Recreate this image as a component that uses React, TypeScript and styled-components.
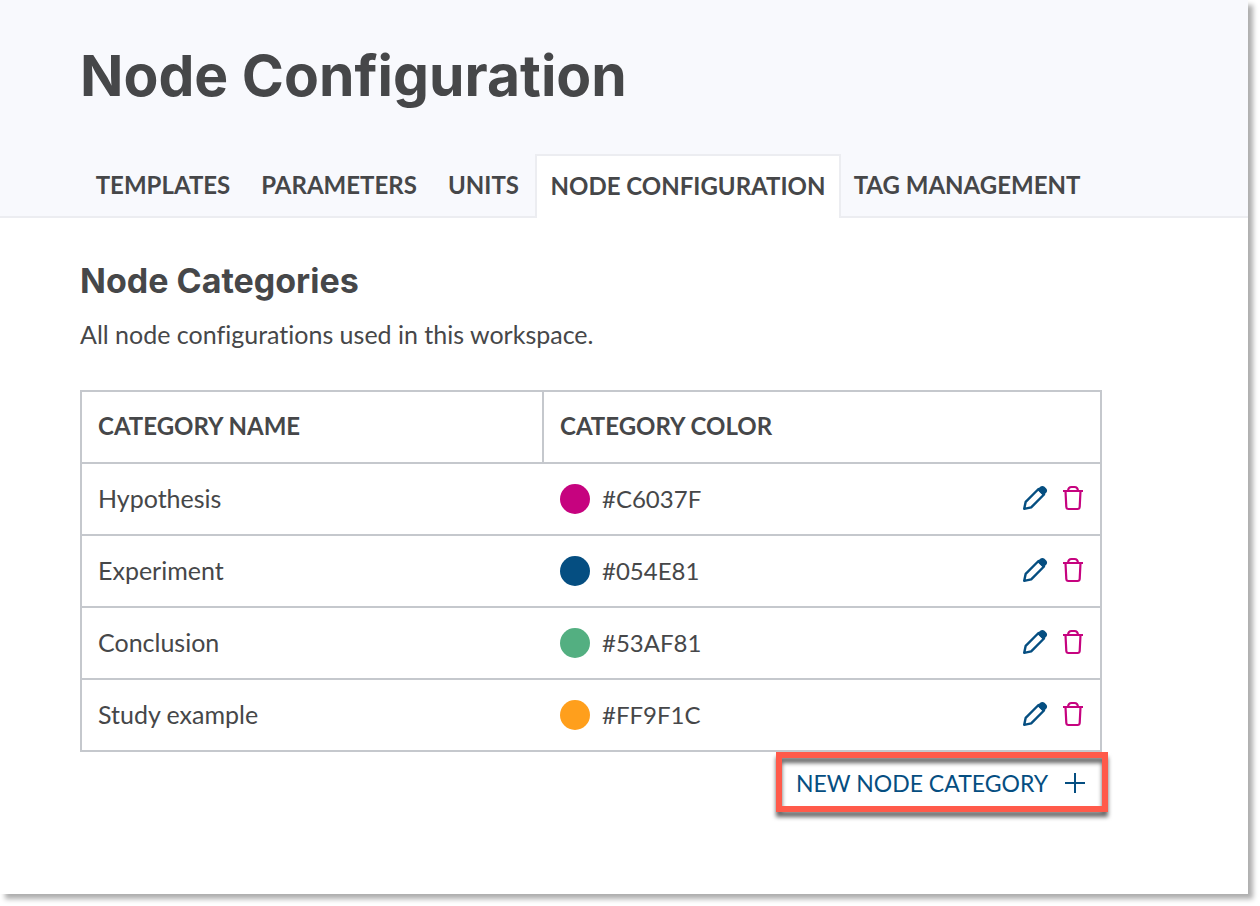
import React from "react";
import styled, { createGlobalStyle } from "styled-components";

const GlobalStyle = createGlobalStyle`
  *, *::before, *::after { box-sizing: border-box; }
  body {
    margin: 0;
    background: #ffffff;
    color: #464749;
    font-family: Lato, "Liberation Sans", sans-serif;
    font-size: 24px;
    line-height: 32px;
    font-variant-ligatures: none;
  }
`;

const Page = styled.div`
  margin: 0 12px 12px 0;
  min-height: calc(100vh - 12px);
  background: #ffffff;
  box-shadow: 5px 5px 5px rgba(0, 0, 0, 0.32);
`;

const Header = styled.header`
  display: flex;
  flex-direction: column;
  gap: 42px;
  padding: 40px 80px 0;
  background: #f8f9fd;
  box-shadow: inset 0 -2px 0 #ecedf1;
`;

const Title = styled.h1`
  margin: 0;
  font-family: Inter, sans-serif;
  font-size: 57px;
  line-height: 72px;
  font-weight: 700;
`;

const Tabs = styled.nav`
  display: grid;
  grid-template-columns: 166px 186px 103px 306px 252px;
`;

const Tab = styled.a<{ $active?: boolean }>`
  display: flex;
  align-items: center;
  justify-content: center;
  height: 64px;
  padding-bottom: ${(p) => (p.$active ? "2px" : "4px")};
  border: 2px solid ${(p) => (p.$active ? "#ecedf1" : "transparent")};
  border-bottom: 0;
  background: ${(p) => (p.$active ? "#ffffff" : "transparent")};
  color: inherit;
  font-weight: 700;
  white-space: nowrap;
  text-decoration: none;
`;

const Content = styled.main`
  max-width: 1182px;
  padding: 40px 80px 80px;
`;

const Heading = styled.h2`
  margin: 0;
  font-family: Inter, sans-serif;
  font-size: 34px;
  line-height: 46px;
  font-weight: 700;
`;

const Description = styled.p`
  margin: 14px 0 40px;
  font-size: 25px;
`;

const Table = styled.table`
  width: 100%;
  border: 2px solid #c5c8cd;
  border-spacing: 0;
  table-layout: fixed;
`;

const HeadCell = styled.th<{ $divided?: boolean }>`
  width: ${(p) => (p.$divided ? "462px" : "auto")};
  height: 72px;
  padding: 0 16px 2px;
  border-bottom: 2px solid #c5c8cd;
  border-right: ${(p) => (p.$divided ? "2px solid #c5c8cd" : "0")};
  text-align: left;
  font-weight: 700;
`;

const Row = styled.tr`
  &:not(:last-child) > td {
    border-bottom: 2px solid #c5c8cd;
  }
  &:last-child > td {
    height: 70px;
  }
`;

const Cell = styled.td`
  height: 72px;
  padding: 0 16px;
`;

const NameCell = styled(Cell)`
  padding-bottom: 2px;
  font-size: 25px;
`;

const ColorLine = styled.div`
  display: flex;
  align-items: center;
  gap: 12px;
`;

const Swatch = styled.span<{ $color: string }>`
  width: 30px;
  height: 30px;
  border-radius: 50%;
  background: ${(p) => p.$color};
`;

const Actions = styled.div`
  display: flex;
  gap: 14px;
  margin-left: auto;
  padding-bottom: 2px;
`;

const IconButton = styled.button<{ $tone: string }>`
  display: flex;
  padding: 0;
  border: 0;
  background: none;
  color: ${(p) => p.$tone};
  cursor: pointer;
`;

const Footer = styled.div`
  display: flex;
  justify-content: flex-end;
  padding-top: 6px;
`;

const NewButton = styled.button`
  position: relative;
  display: flex;
  align-items: center;
  justify-content: space-between;
  width: 320px;
  height: 48px;
  padding: 2px 16px 0 14px;
  border: 0;
  background: #ffffff;
  color: #054e81;
  font: inherit;
  font-size: 23px;
  white-space: nowrap;
  cursor: pointer;

  &::before {
    content: "";
    position: absolute;
    inset: -6px;
    border: 6px solid #ff5a4a;
    filter: drop-shadow(0 5px 2px rgba(0, 0, 0, 0.6));
    pointer-events: none;
  }
`;

const PencilIcon = () => (
  <svg width="26" height="26" viewBox="0 0 26 26" fill="none" aria-hidden="true">
    <path
      d="M2.200 23.800l1.500-7L16.500 4l5.500 5.500L9.200 22.300z"
      stroke="currentColor"
      strokeWidth="2.400"
      strokeLinejoin="round"
    />
    <path
      d="M15.200 4.800l3-3c1.200-1.200 3.100-1.200 4.300 0l1.700 1.700c1.200 1.200 1.200 3.100 0 4.300l-3 3z"
      fill="currentColor"
    />
  </svg>
);

const TrashIcon = () => (
  <svg width="22" height="26" viewBox="0 0 22 26" fill="none" aria-hidden="true">
    <path
      d="M1 6h20M6 6c.2-2.600 1.500-4 3.500-4h3c2 0 3.300 1.400 3.500 4M3.500 6l.8 16c.1 1.300.8 2 2.100 2h9.200c1.300 0 2-.7 2.100-2l.8-16"
      stroke="currentColor"
      strokeWidth="2.200"
    />
  </svg>
);

const PlusIcon = () => (
  <svg width="22" height="22" viewBox="0 0 22 22" aria-hidden="true">
    <path d="M11 1v20M1 11h20" stroke="currentColor" strokeWidth="2" />
  </svg>
);

const tabs = ["TEMPLATES", "PARAMETERS", "UNITS", "NODE CONFIGURATION", "TAG MANAGEMENT"];

const categories = [
  { name: "Hypothesis", color: "#C6037F" },
  { name: "Experiment", color: "#054E81" },
  { name: "Conclusion", color: "#53AF81" },
  { name: "Study example", color: "#FF9F1C" },
];

export default function App() {
  return (
    <>
      <GlobalStyle />
      <Page>
        <Header>
          <Title>Node Configuration</Title>
          <Tabs aria-label="Configuration sections">
            {tabs.map((label) => {
              const active = label === "NODE CONFIGURATION";
              return (
                <Tab key={label} href="#" $active={active} aria-current={active ? "page" : undefined}>
                  {label}
                </Tab>
              );
            })}
          </Tabs>
        </Header>
        <Content>
          <Heading>Node Categories</Heading>
          <Description>All node configurations used in this workspace.</Description>
          <Table>
            <thead>
              <tr>
                <HeadCell scope="col" $divided>CATEGORY NAME</HeadCell>
                <HeadCell scope="col">CATEGORY COLOR</HeadCell>
              </tr>
            </thead>
            <tbody>
              {categories.map(({ name, color }) => (
                <Row key={name}>
                  <NameCell>{name}</NameCell>
                  <Cell>
                    <ColorLine>
                      <Swatch $color={color} />
                      {color}
                      <Actions>
                        <IconButton type="button" $tone="#054e81" aria-label={`Edit ${name}`}>
                          <PencilIcon />
                        </IconButton>
                        <IconButton type="button" $tone="#c6037f" aria-label={`Delete ${name}`}>
                          <TrashIcon />
                        </IconButton>
                      </Actions>
                    </ColorLine>
                  </Cell>
                </Row>
              ))}
            </tbody>
          </Table>
          <Footer>
            <NewButton type="button">
              NEW NODE CATEGORY
              <PlusIcon />
            </NewButton>
          </Footer>
        </Content>
      </Page>
    </>
  );
}
